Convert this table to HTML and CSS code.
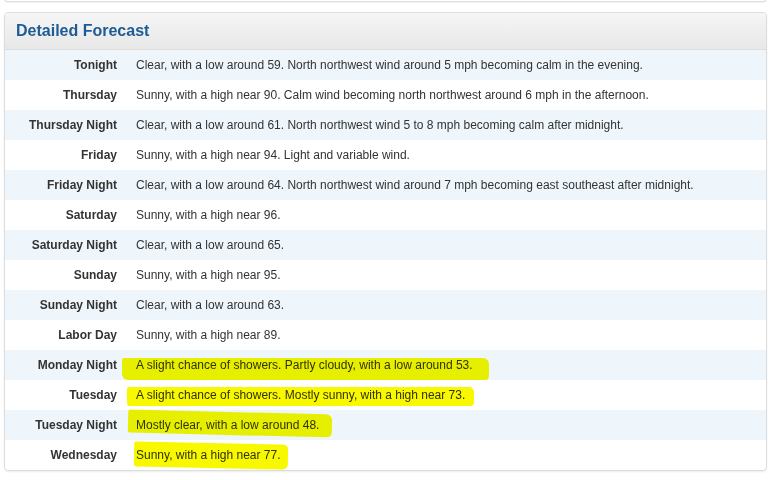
FILE: index.html
```html
<!DOCTYPE html>
<html>
<head>
<meta charset="utf-8">
<link rel="stylesheet" href="styles.css">
</head>
<body>
<div class="prev-panel"></div>
<div class="panel">
  <div class="panel-heading"><h1>Detailed Forecast</h1></div>
  <div class="rows">
    <div class="row"><div class="label">Tonight</div><div class="desc">Clear, with a low around 59. North northwest wind around 5 mph becoming calm in the evening.</div></div>
    <div class="row"><div class="label">Thursday</div><div class="desc">Sunny, with a high near 90. Calm wind becoming north northwest around 6 mph in the afternoon.</div></div>
    <div class="row"><div class="label">Thursday Night</div><div class="desc">Clear, with a low around 61. North northwest wind 5 to 8 mph becoming calm after midnight.</div></div>
    <div class="row"><div class="label">Friday</div><div class="desc">Sunny, with a high near 94. Light and variable wind.</div></div>
    <div class="row"><div class="label">Friday Night</div><div class="desc">Clear, with a low around 64. North northwest wind around 7 mph becoming east southeast after midnight.</div></div>
    <div class="row"><div class="label">Saturday</div><div class="desc">Sunny, with a high near 96.</div></div>
    <div class="row"><div class="label">Saturday Night</div><div class="desc">Clear, with a low around 65.</div></div>
    <div class="row"><div class="label">Sunday</div><div class="desc">Sunny, with a high near 95.</div></div>
    <div class="row"><div class="label">Sunday Night</div><div class="desc">Clear, with a low around 63.</div></div>
    <div class="row"><div class="label">Labor Day</div><div class="desc">Sunny, with a high near 89.</div></div>
    <div class="row"><div class="label">Monday Night</div><div class="desc"><span class="hl hl-1"></span>A slight chance of showers. Partly cloudy, with a low around 53.</div></div>
    <div class="row"><div class="label">Tuesday</div><div class="desc"><span class="hl hl-2"></span>A slight chance of showers. Mostly sunny, with a high near 73.</div></div>
    <div class="row"><div class="label">Tuesday Night</div><div class="desc"><span class="hl hl-3"></span>Mostly clear, with a low around 48.</div></div>
    <div class="row"><div class="label">Wednesday</div><div class="desc"><span class="hl hl-4"></span>Sunny, with a high near 77.</div></div>
  </div>
</div>
</body>
</html>
```
FILE: styles.css
```css
html, body {
  margin: 0;
  padding: 0;
  background: #fff;
}
body {
  font-family: "Liberation Sans", Arial, sans-serif;
  font-size: 12px;
  color: #333;
  width: 774px;
  height: 480px;
  overflow: hidden;
}
.prev-panel {
  margin: -10px 7px 0 4px;
  height: 11px;
  border: 1px solid #ddd;
  border-top: none;
  border-radius: 0 0 4px 4px;
  box-shadow: 0 1px 1px rgba(0,0,0,0.05);
}
.panel {
  margin: 10px 7px 0 4px;
  border: 1px solid #ddd;
  border-radius: 4px;
  box-shadow: 0 1px 2px rgba(0,0,0,0.08);
  overflow: hidden;
}
.panel-heading {
  height: 37px;
  box-sizing: border-box;
  padding: 0 11px;
  background: linear-gradient(to bottom, #f5f5f5 0%, #e8e8e8 100%);
  border-bottom: 1px solid #ddd;
  display: flex;
  align-items: center;
}
.panel-heading h1 {
  margin: 0;
  font-size: 16px;
  font-weight: bold;
  color: #1d5b96;
}
.row {
  display: flex;
  height: 30px;
  align-items: center;
}
.row:nth-child(odd) {
  background: #eef6fc;
}
.label {
  width: 112px;
  flex: none;
  text-align: right;
  font-weight: bold;
  padding-right: 19px;
}
.desc {
  position: relative;
  flex: 1;
  white-space: nowrap;
}
.hl {
  position: absolute;
  background: #f8f800;
  mix-blend-mode: multiply;
}
.hl-1 {
  left: -14px;
  top: 0;
  width: 367px;
  height: 22px;
  border-radius: 2px 6px 4px 6px;
}
.hl-2 {
  left: -9px;
  top: -1px;
  width: 347px;
  height: 19px;
  border-radius: 2px 5px 4px 3px;
}
.hl-3 {
  left: -8px;
  top: -6px;
  width: 204px;
  height: 23px;
  transform: rotate(1.4deg);
  border-radius: 2px 6px 5px 3px;
}
.hl-4 {
  left: -2px;
  top: -5px;
  width: 154px;
  height: 25px;
  transform: rotate(1.2deg);
  border-radius: 2px 5px 5px 3px;
}
```
